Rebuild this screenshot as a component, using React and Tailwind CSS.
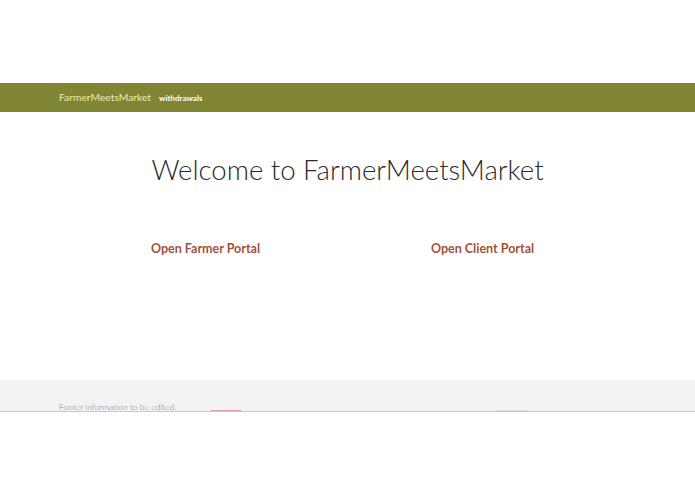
export default function App() {
  return (
    <div className="min-h-screen bg-white" style={{ fontFamily: 'Lato, "Open Sans", sans-serif' }}>
      <div className="h-[83px]" />
      <nav className="h-[29px] bg-[#7f8532] flex items-center pl-[59px]">
        <span className="text-[10.3px] text-[#ecebb8]">FarmerMeetsMarket</span>
        <span className="ml-[8px] text-[8px] font-bold text-white">withdrawals</span>
      </nav>
      <main className="h-[268px]">
        <h1 className="pt-[38px] text-center text-[27.6px] leading-[40px] font-light text-[#2a2a2a]">
          Welcome to FarmerMeetsMarket
        </h1>
        <div className="mt-[50px] ml-[151px] grid grid-cols-[280px_280px] text-[12.5px] font-bold text-[#a0523d]">
          <a href="#">Open Farmer Portal</a>
          <a href="#">Open Client Portal</a>
        </div>
      </main>
      <footer className="relative h-[32px] bg-[#f3f3f3] border-b border-[#c6c6c6] overflow-hidden">
        <p className="pl-[59px] pt-[21px] text-[8.5px] leading-[12px] font-light text-[#808080]">
          Footer information to be edited.
        </p>
        <span className="absolute bottom-0 left-[211px] w-[30px] h-[1px] bg-[#e4a3a3]" />
        <span className="absolute bottom-0 left-[496px] w-[32px] h-[1px] bg-[#dcdde6]" />
      </footer>
    </div>
  )
}
